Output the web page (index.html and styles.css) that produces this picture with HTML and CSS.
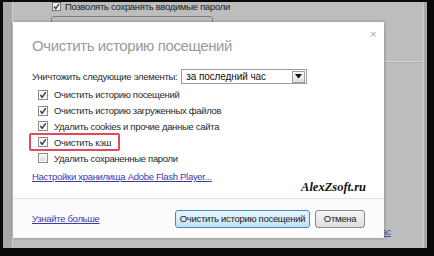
FILE: index.html
```html
<!DOCTYPE html>
<html lang="ru">
<head>
<meta charset="utf-8">
<link rel="stylesheet" href="styles.css">
</head>
<body>
<div class="screen">
  <div class="side"></div>
  <div class="main">
    <div class="bg-row">
      <span class="bg-check"><svg width="9" height="9" viewBox="0 0 9 9"><rect x="0.5" y="0.5" width="8" height="8" fill="#eee" stroke="#777"/><path d="M2 4.5 L3.8 6.6 L7 2" fill="none" stroke="#333" stroke-width="1.3"/></svg></span>
      <span>Позволять сохранять вводимые пароли</span>
    </div>
    <div class="bg-input"></div>
    <div class="bg-line"></div>
    <div class="bg-spacer"></div>
    <div class="bg-link-row"><a class="bg-link">Подробнее сейчас</a></div>
  </div>
  <div class="rstrip"></div>

  <div class="dialog">
    <div class="close">×</div>
    <div class="body">
      <div class="title">Очистить историю посещений</div>
      <div class="range">
        <span>Уничтожить следующие элементы:</span>
        <div class="select">
          <span class="sel-text">за последний час</span>
          <span class="sel-btn"><svg width="7" height="5" viewBox="0 0 7 5"><path d="M0 0 H7 L3.5 4.5 Z" fill="#111"/></svg></span>
        </div>
      </div>
      <div class="items">
        <div class="item"><span class="cb checked"></span>Очистить историю посещений</div>
        <div class="item"><span class="cb checked"></span>Очистить историю загруженных файлов</div>
        <div class="item"><span class="cb checked"></span>Удалить cookies и прочие данные сайта</div>
        <div class="item hl"><span class="cb checked"></span>Очистить кэш<span class="mark"></span></div>
        <div class="item"><span class="cb"></span>Удалить сохраненные пароли</div>
      </div>
      <a class="flash">Настройки хранилища Adobe Flash Player...</a>
      <div class="watermark">AlexZsoft.ru</div>
    </div>
    <div class="footer">
      <a class="more">Узнайте больше</a>
      <div class="buttons">
        <button class="btn primary">Очистить историю посещений</button>
        <button class="btn cancel">Отмена</button>
      </div>
    </div>
  </div>
</div>
</body>
</html>
```

FILE: styles.css
```css
html, body {
  margin: 0;
  padding: 0;
  background: #0a0a0a;
  width: 434px;
  height: 256px;
  overflow: hidden;
  font-family: "Liberation Sans", Arial, sans-serif;
  font-size: 9.5px;
  letter-spacing: -0.3px;
  color: #2a2a2a;
}

.screen {
  position: relative;
  display: flex;
  height: 246px;
  margin: 2px 7px 0 3px;
  background: #bdbdbd;
}

.side {
  width: 9px;
  background: #a9a9a9;
  border-right: 1px solid #cfcfcf;
}

.main {
  flex: 1;
  display: flex;
  flex-direction: column;
  overflow: hidden;
}

.rstrip {
  width: 3px;
  background: #a8a8a8;
  border-left: 1px solid #cdcdcd;
}

.bg-row {
  display: flex;
  align-items: center;
  gap: 4px;
  margin-top: -2px;
  padding-left: 39px;
  height: 12px;
  color: #222;
}

.bg-check {
  display: flex;
}

.bg-input {
  margin: 4px 0 0 38px;
  width: 160px;
  height: 24px;
  border: 1px solid #7d7d7d;
  border-radius: 3px;
}

.bg-line {
  margin-top: 19px;
  height: 1px;
  background: #d2d2d2;
  border-bottom: 1px solid #b0b0b0;
}

.bg-spacer {
  height: 163px;
}

.bg-link-row {
  display: flex;
  justify-content: flex-end;
  padding-right: 32px;
}

.bg-link {
  color: #4646a6;
  text-decoration: underline;
}

.dialog {
  position: absolute;
  left: 10px;
  top: 20px;
  width: 371px;
  height: 216px;
  background: #fff;
  box-shadow: 0 0 3px rgba(0, 0, 0, 0.35);
  display: flex;
  flex-direction: column;
}

.close {
  position: absolute;
  right: 8px;
  top: 6px;
  font-size: 11px;
  color: #a8a8a8;
  line-height: 12px;
}

.body {
  position: relative;
  flex: 1;
  padding: 15px 20px 0 19px;
  display: flex;
  flex-direction: column;
}

.title {
  font-size: 15px;
  letter-spacing: -0.4px;
  color: #9a9a9a;
  line-height: 18px;
  height: 18px;
}

.range {
  display: flex;
  align-items: center;
  gap: 4px;
  margin-top: 14px;
  height: 15px;
}

.select {
  display: flex;
  align-items: center;
  justify-content: space-between;
  width: 119px;
  height: 13px;
  border: 1px solid #9c9c9c;
  padding: 0 1px 0 4px;
  font-size: 10px;
  letter-spacing: -0.1px;
  color: #111;
}

.sel-btn {
  display: flex;
  align-items: center;
  justify-content: center;
  width: 11px;
  height: 10px;
  border: 1px solid #a0a0a0;
  background: linear-gradient(#fafafa, #dedede);
}

.items {
  display: flex;
  flex-direction: column;
  margin-top: 3px;
}

.item {
  position: relative;
  display: flex;
  align-items: center;
  height: 15.8px;
  padding-left: 6px;
  gap: 6px;
}

.cb {
  width: 8px;
  height: 8px;
  border: 1px solid #8a8a8a;
  background: linear-gradient(#f6f6f6, #dcdcdc);
  box-shadow: inset 0 0 0 1px #fff;
}

.cb.checked {
  background: #f4f4f4 url("data:image/svg+xml,%3Csvg xmlns='http://www.w3.org/2000/svg' width='8' height='8' viewBox='0 0 8 8'%3E%3Cpath d='M1.3 4 L3.2 6.3 L6.8 1.2' fill='none' stroke='%23283a6a' stroke-width='1.4'/%3E%3C/svg%3E") center/8px 8px no-repeat;
}

.mark {
  position: absolute;
  left: -3px;
  top: -1px;
  width: 87px;
  height: 14px;
  border: 2px solid #e14a5a;
  border-radius: 2px;
}

.flash {
  margin-top: 5px;
  color: #3b3ba6;
  text-decoration: underline;
  line-height: 12px;
}

.watermark {
  position: absolute;
  right: 18px;
  top: 158px;
  font-family: "Liberation Serif", "Times New Roman", serif;
  font-weight: bold;
  font-style: italic;
  font-size: 12.5px;
  letter-spacing: 0;
  color: #111;
}

.footer {
  height: 39px;
  border-top: 1px solid #e2e2e2;
  background: #fbfbfb;
  display: flex;
  align-items: center;
  justify-content: space-between;
  padding: 0 19px 0 19px;
}

.more {
  color: #3b3ba6;
  text-decoration: underline;
}

.buttons {
  display: flex;
  gap: 5px;
}

.btn {
  height: 18px;
  padding: 0;
  white-space: nowrap;
  font-family: "Liberation Sans", Arial, sans-serif;
  font-size: 9.5px;
  letter-spacing: -0.3px;
  color: #222;
  border: 1px solid #8a8a8a;
  border-radius: 3px;
  background: linear-gradient(#f5f5f5, #dedede);
}

.btn.primary {
  width: 135px;
  border-color: #4a8ac4;
  background: linear-gradient(#eaf6fd, #bfe2f7);
}

.btn.cancel {
  width: 50px;
}
```
